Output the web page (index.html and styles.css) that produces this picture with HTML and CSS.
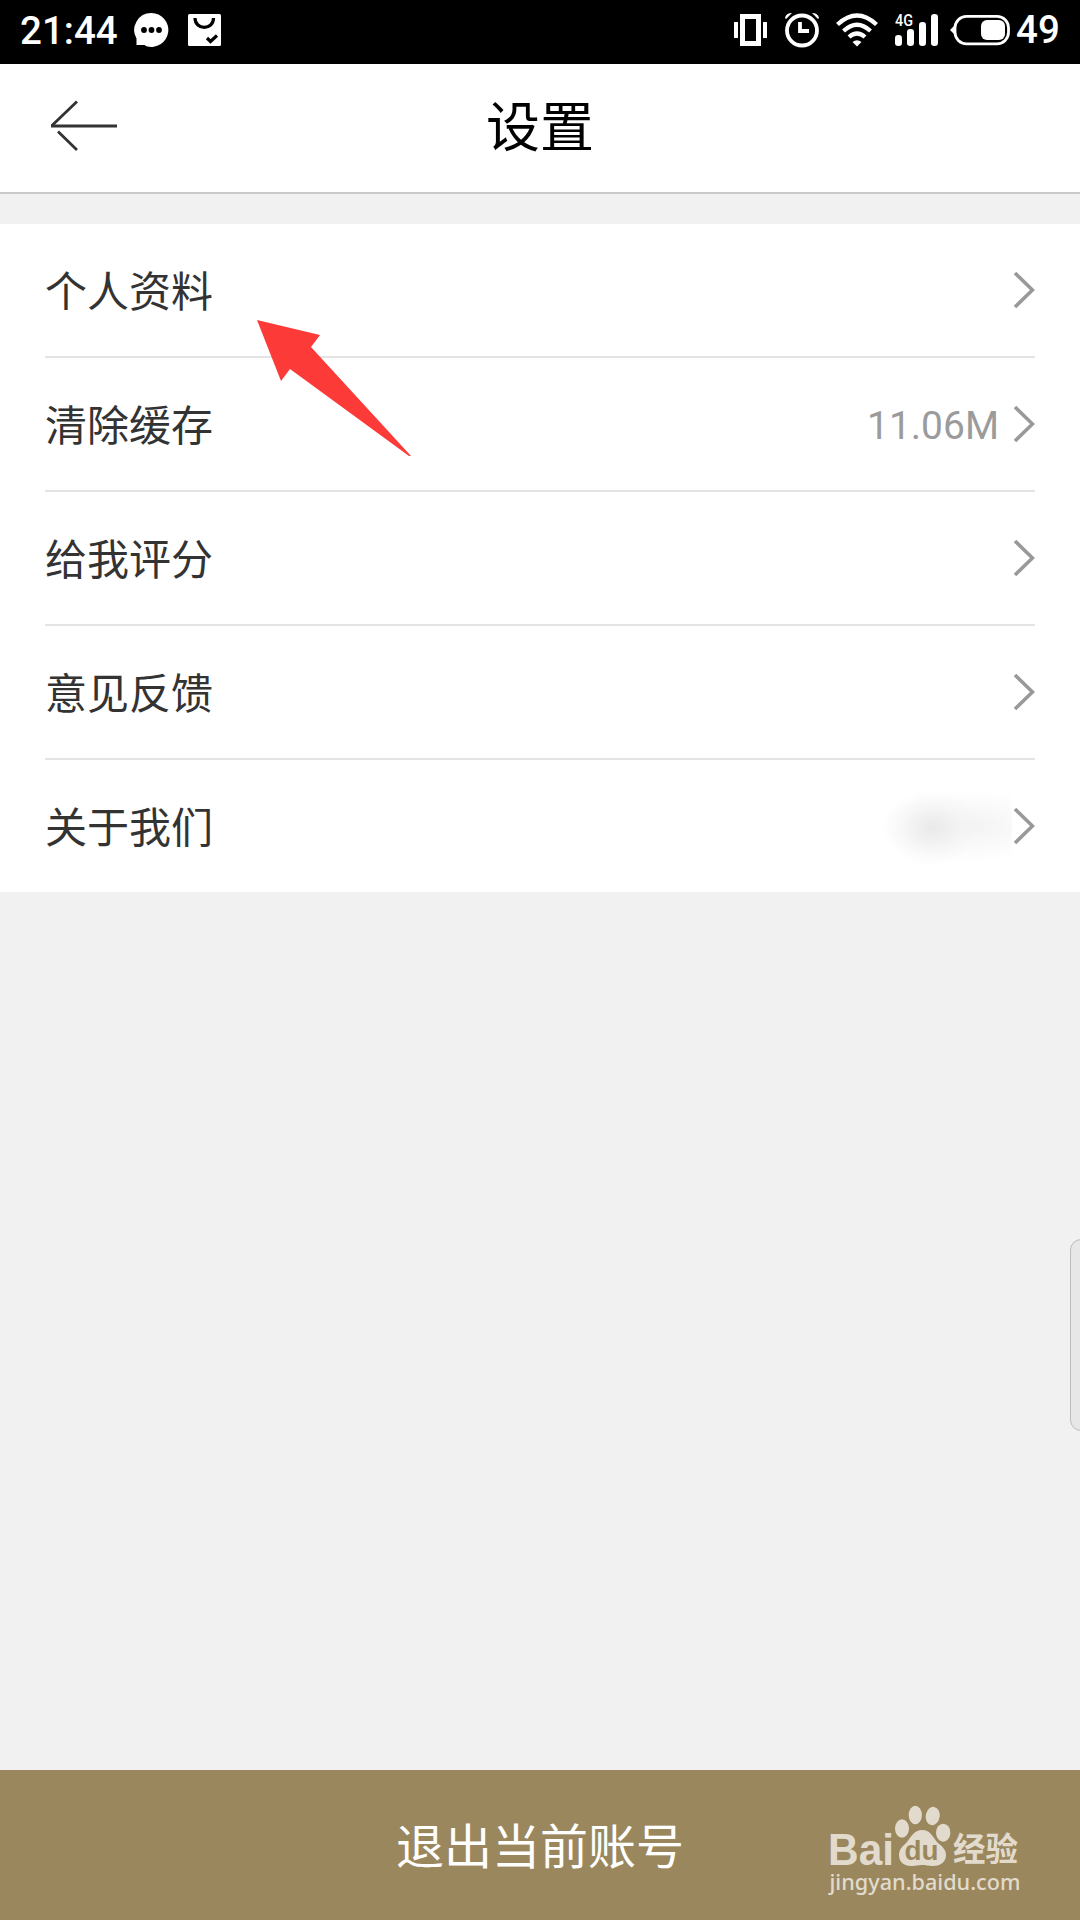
FILE: index.html
```html
<!DOCTYPE html>
<html lang="zh-CN">
<head>
    <meta charset="UTF-8">
    <meta name="viewport" content="width=device-width, initial-scale=1.0">
    <title>设置</title>
    <link rel="stylesheet" href="styles.css">
</head>
<body>
<div class="status-bar">
    <div class="status-left">
        <span class="time">21:44</span>
        <svg class="icon-chat" width="36" height="64" viewBox="134 0 36 64">
            <path d="M151.500 13a17 17 0 1 1-5 33.300l-2-1.300h-8v-6.500A17 17 0 0 1 151.500 13z" fill="#fff"/>
            <circle cx="144" cy="30" r="2.900"/>
            <circle cx="151.500" cy="30" r="2.900"/>
            <circle cx="159" cy="30" r="2.900"/>
        </svg>
        <svg class="icon-bag" width="33" height="64" viewBox="188 0 33 64">
            <rect x="188" y="14" width="33" height="32" rx="1.500" fill="#fff"/>
            <path d="M195 18c0 12.500 18.500 12.500 18.500 0" fill="none" stroke="#000" stroke-width="3.200"/>
            <path d="M207 38l3.500 3.500 6.500-6" fill="none" stroke="#000" stroke-width="3.200"/>
        </svg>
    </div>
    <div class="status-right">
        <svg width="33" height="64" viewBox="734 0 33 64" fill="#fff">
            <rect x="734" y="22" width="4" height="16"/>
            <rect x="763" y="22" width="4" height="16"/>
            <path d="M740 14h21v32h-21zM745 19v22h11V19z" fill-rule="evenodd"/>
        </svg>
        <svg width="34" height="64" viewBox="785 0 34 64" fill="none" stroke="#fff">
            <circle cx="802" cy="30.500" r="15" stroke-width="3.800"/>
            <path d="M800 22v9h9" stroke-width="3.800"/>
            <path d="M785 18q1-5 7-5l-6 6zM819 18q-1-5-7-5l6 6z" fill="#fff" stroke="none"/>
        </svg>
        <svg width="42" height="64" viewBox="836 0 42 64" fill="none" stroke="#fff" stroke-width="4.300">
            <path d="M837.500 24.500q19.500-18 39 0M843.500 31q13.500-12.500 27 0M849 37q8-7 16 0"/>
            <path d="M857 46.500l-4.500-4.500q4.500-3.500 9 0z" fill="#fff" stroke="none"/>
        </svg>
        <svg width="44" height="64" viewBox="895 0 44 64" fill="#fff">
            <text class="net" x="895" y="26" textLength="18" lengthAdjust="spacingAndGlyphs">4G</text>
            <rect x="895" y="35" width="7" height="11" rx="3.200"/>
            <rect x="907" y="29" width="7" height="17" rx="3.200"/>
            <rect x="919" y="22" width="7" height="24" rx="3.200"/>
            <rect x="931" y="14" width="7" height="32" rx="3.200"/>
        </svg>
        <svg width="60" height="64" viewBox="950 0 60 64">
            <path d="M956 24l-6 6 6 6z" fill="#fff"/>
            <rect x="955" y="16.300" width="53.500" height="27.500" rx="11.500" fill="none" stroke="#fff" stroke-width="2.800"/>
            <rect x="981" y="20" width="24" height="20" rx="6" fill="#fff"/>
        </svg>
        <span class="battery">49</span>
    </div>
</div>

<header>
    <svg class="back" width="68" height="54" viewBox="50 99 68 54" fill="none" stroke="#333">
        <path d="M51 126h66" stroke-width="3.200"/>
        <path d="M77 101.500L52 125.500M58 131.500L77 150" stroke-width="2.800"/>
    </svg>
    <h1>设置</h1>
</header>

<div class="settings-list">
    <div class="row">
        <span class="label">个人资料</span>
        <svg class="chevron" width="22" height="38" viewBox="0 0 22 38"><path d="M2 2l17.500 17L2 36"/></svg>
    </div>
    <div class="row">
        <span class="label">清除缓存</span>
        <span class="value">11.06M</span>
        <svg class="chevron" width="22" height="38" viewBox="0 0 22 38"><path d="M2 2l17.500 17L2 36"/></svg>
    </div>
    <div class="row">
        <span class="label">给我评分</span>
        <svg class="chevron" width="22" height="38" viewBox="0 0 22 38"><path d="M2 2l17.500 17L2 36"/></svg>
    </div>
    <div class="row">
        <span class="label">意见反馈</span>
        <svg class="chevron" width="22" height="38" viewBox="0 0 22 38"><path d="M2 2l17.500 17L2 36"/></svg>
    </div>
    <div class="row">
        <span class="label">关于我们</span>
        <span class="hidden-value"></span>
        <svg class="chevron" width="22" height="38" viewBox="0 0 22 38"><path d="M2 2l17.500 17L2 36"/></svg>
    </div>

    <!-- red pointer over the first row -->
    <svg class="pointer" width="156" height="138" viewBox="256 319 156 138">
        <path d="M257 320l63 15-9 12 100 109h-2L290 369l-9 12z" fill="#fc3a38"/>
    </svg>
</div>

<div class="side-handle"></div>

<footer>
    <button class="logout">退出当前账号</button>
    <svg class="watermark" width="200" height="110" viewBox="825 1800 200 110">
        <text class="wm-bai" x="828" y="1864.500" textLength="66" lengthAdjust="spacingAndGlyphs">Bai</text>
        <ellipse cx="902" cy="1828.500" rx="7" ry="9.300"/>
        <ellipse cx="915.300" cy="1815" rx="6.600" ry="9.300"/>
        <ellipse cx="932.700" cy="1816" rx="7" ry="9.200" transform="rotate(10 932.700 1816)"/>
        <ellipse cx="943.200" cy="1832.700" rx="7.200" ry="9"/>
        <path d="M922 1830c9 0 11 8 16 13 5 4 8 7 8 12 0 8-7 11-13 11-5 0-7-1-11-1s-6 1-11 1c-7 0-12-4-12-11 0-6 4-9 8-13 4-5 7-12 15-12z"/>
        <text class="wm-du" x="904.500" y="1860" textLength="34" lengthAdjust="spacingAndGlyphs">du</text>
        <text class="wm-cn" x="953" y="1861" textLength="65" lengthAdjust="spacingAndGlyphs">经验</text>
        <text class="wm-url" x="829.500" y="1890" textLength="191" lengthAdjust="spacingAndGlyphs">jingyan.baidu.com</text>
    </svg>
</footer>
</body>
</html>
```

FILE: styles.css
```css
body {
    font-family: Roboto, "Noto Sans CJK SC", sans-serif;
    background-color: #F1F1F1;
    color: #333333;
    margin: 0;
    padding: 0;
    height: 1920px;
    display: flex;
    flex-direction: column;
    position: relative;
    overflow: hidden;
}

svg {
    display: block;
    flex: none;
}

.status-bar {
    height: 64px;
    background-color: #000000;
    color: #FFFFFF;
    display: flex;
    justify-content: space-between;
    font-size: 38.5px;
    font-weight: 500;
    line-height: 61px;
    padding: 0 21px 0 20px;
}

.status-left, .status-right {
    display: flex;
}

.time {
    width: 114px;
}

.icon-bag {
    margin-left: 18px;
}

.status-right {
    gap: 17px;
}

.status-right svg:nth-of-type(1) {
    margin-right: 1px;
}

.status-right svg:nth-of-type(5) {
    margin-left: -6px;
}

.net {
    font-size: 16px;
    font-weight: 500;
}

.battery {
    width: 43px;
    margin-left: -11px;
    line-height: 59px;
}

header {
    box-sizing: border-box;
    height: 130px;
    background-color: #FFFFFF;
    border-bottom: 2px solid #CACACA;
    display: grid;
    grid-template-columns: 1fr auto 1fr;
    align-items: center;
}

.back {
    margin-left: 50px;
    margin-top: -4px;
}

header h1 {
    margin: 0;
    padding-top: 2px;
    font-size: 54px;
    font-weight: 400;
    line-height: 126px;
    color: #000000;
}

.settings-list {
    position: relative;
    margin-top: 30px;
    padding: 0 45px;
    background-color: #FFFFFF;
}

.row {
    height: 132px;
    display: flex;
    align-items: center;
    border-bottom: 2px solid #E4E4E4;
}

.row:nth-child(5) {
    border-bottom: none;
}

.label {
    flex: 1;
    font-size: 42px;
    padding-bottom: 4px;
}

.value {
    font-size: 39px;
    color: #9B9B9B;
    margin-right: 14px;
    padding-top: 4px;
}

.chevron {
    fill: none;
    stroke: #999999;
    stroke-width: 3.6;
}

.hidden-value {
    width: 128px;
    height: 80px;
    margin-right: 1px;
    background: radial-gradient(ellipse at center, #E6E6E6CC, #F3F3F380 45%, #FFFFFF00 70%) 0 4px / 95px 76px no-repeat,
        radial-gradient(ellipse 90px 36px at 85px 40px, #F3F3F3, #F9F9F9 50%, #FFFFFF00);
}

.pointer {
    position: absolute;
    left: 256px;
    top: 95px;
}

.side-handle {
    position: absolute;
    right: -12px;
    top: 1239px;
    width: 20px;
    height: 190px;
    background-color: #E7E7E7;
    border: 1px solid #BDBDBD;
    border-radius: 12px;
}

footer {
    position: relative;
    margin-top: auto;
}

.logout {
    display: block;
    width: 100%;
    height: 150px;
    padding: 0 0 4px;
    border: none;
    background-color: #9B875D;
    color: #FFFFFF;
    font-family: inherit;
    font-size: 48px;
    cursor: pointer;
}

.watermark {
    position: absolute;
    left: 825px;
    top: 30px;
    fill: #E2DBCD;
}

.wm-bai {
    font-family: "Liberation Sans", sans-serif;
    font-size: 45px;
    font-weight: 700;
}

.wm-du {
    font-family: "Liberation Sans", sans-serif;
    font-size: 28px;
    font-weight: 700;
    fill: #9B875D;
}

.wm-cn {
    font-size: 33px;
    font-weight: 700;
}

.wm-url {
    font-family: "Noto Sans", sans-serif;
    font-size: 22.5px;
    font-weight: 500;
}
```
